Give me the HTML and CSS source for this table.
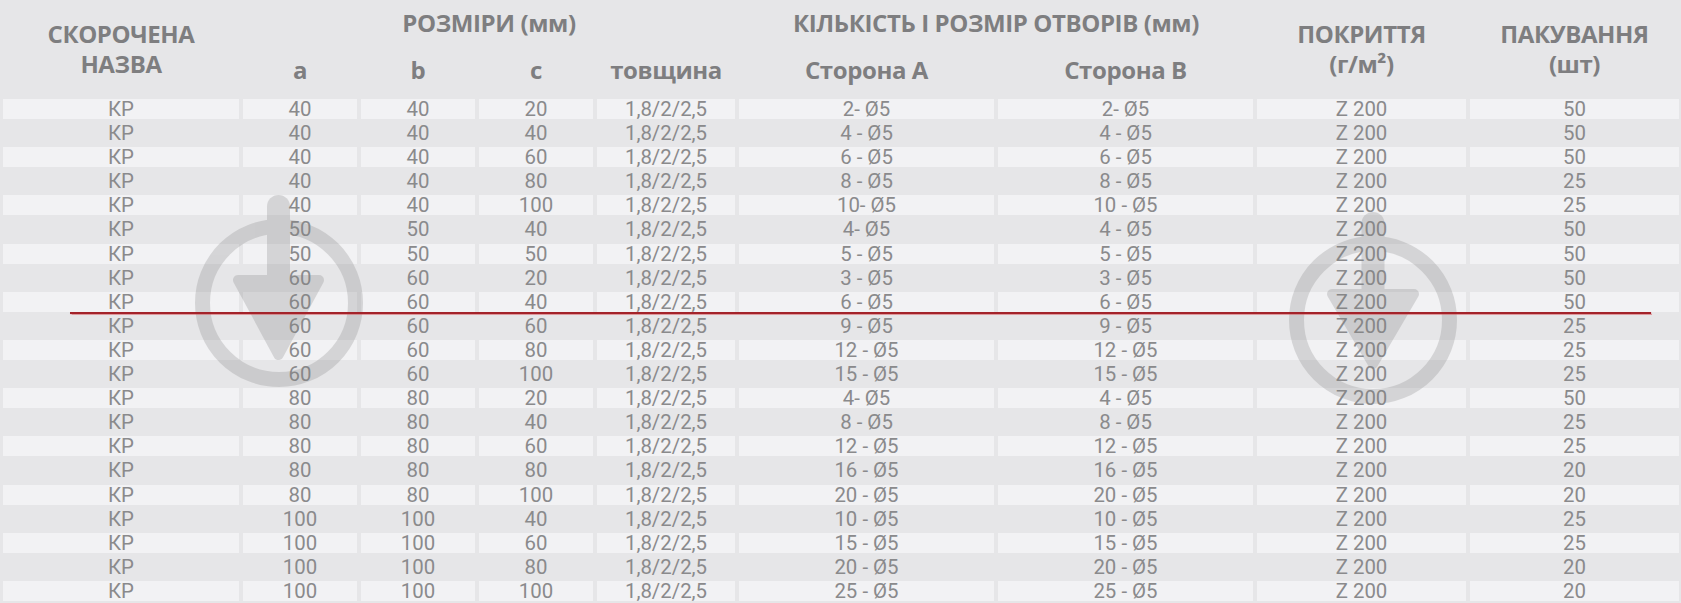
FILE: index.html
```html
<!DOCTYPE html>
<html lang="uk">
<head>
<meta charset="utf-8">
<title>КР</title>
<link rel="stylesheet" href="styles.css">
</head>
<body>
<div class="page">
  <div class="head">
    <div class="h-name">СКОРОЧЕНА<br>НАЗВА</div>
    <div class="h-group g-size">РОЗМІРИ (мм)</div>
    <div class="h-group g-holes">КІЛЬКІСТЬ І РОЗМІР ОТВОРІВ (мм)</div>
    <div class="h-name h-cover">ПОКРИТТЯ<br>(г/м²)</div>
    <div class="h-name h-pack">ПАКУВАННЯ<br>(шт)</div>
    <div class="h-sub s-a">a</div>
    <div class="h-sub s-b">b</div>
    <div class="h-sub s-c">c</div>
    <div class="h-sub s-t">товщина</div>
    <div class="h-sub s-sa">Сторона А</div>
    <div class="h-sub s-sb">Сторона В</div>
  </div>

  <div class="grid">
    <div class="row odd"><div>КР</div><div>40</div><div>40</div><div>20</div><div>1,8/2/2,5</div><div>2- Ø5</div><div>2- Ø5</div><div>Z 200</div><div>50</div></div>
    <div class="row"><div>КР</div><div>40</div><div>40</div><div>40</div><div>1,8/2/2,5</div><div>4 - Ø5</div><div>4 - Ø5</div><div>Z 200</div><div>50</div></div>
    <div class="row odd"><div>КР</div><div>40</div><div>40</div><div>60</div><div>1,8/2/2,5</div><div>6 - Ø5</div><div>6 - Ø5</div><div>Z 200</div><div>50</div></div>
    <div class="row"><div>КР</div><div>40</div><div>40</div><div>80</div><div>1,8/2/2,5</div><div>8 - Ø5</div><div>8 - Ø5</div><div>Z 200</div><div>25</div></div>
    <div class="row odd"><div>КР</div><div>40</div><div>40</div><div>100</div><div>1,8/2/2,5</div><div>10- Ø5</div><div>10 - Ø5</div><div>Z 200</div><div>25</div></div>
    <div class="row"><div>КР</div><div>50</div><div>50</div><div>40</div><div>1,8/2/2,5</div><div>4- Ø5</div><div>4 - Ø5</div><div>Z 200</div><div>50</div></div>
    <div class="row odd"><div>КР</div><div>50</div><div>50</div><div>50</div><div>1,8/2/2,5</div><div>5 - Ø5</div><div>5 - Ø5</div><div>Z 200</div><div>50</div></div>
    <div class="row"><div>КР</div><div>60</div><div>60</div><div>20</div><div>1,8/2/2,5</div><div>3 - Ø5</div><div>3 - Ø5</div><div>Z 200</div><div>50</div></div>
    <div class="row odd"><div>КР</div><div>60</div><div>60</div><div>40</div><div>1,8/2/2,5</div><div>6 - Ø5</div><div>6 - Ø5</div><div>Z 200</div><div>50</div></div>
    <div class="row"><div>КР</div><div>60</div><div>60</div><div>60</div><div>1,8/2/2,5</div><div>9 - Ø5</div><div>9 - Ø5</div><div>Z 200</div><div>25</div></div>
    <div class="row odd"><div>КР</div><div>60</div><div>60</div><div>80</div><div>1,8/2/2,5</div><div>12 - Ø5</div><div>12 - Ø5</div><div>Z 200</div><div>25</div></div>
    <div class="row"><div>КР</div><div>60</div><div>60</div><div>100</div><div>1,8/2/2,5</div><div>15 - Ø5</div><div>15 - Ø5</div><div>Z 200</div><div>25</div></div>
    <div class="row odd"><div>КР</div><div>80</div><div>80</div><div>20</div><div>1,8/2/2,5</div><div>4- Ø5</div><div>4 - Ø5</div><div>Z 200</div><div>50</div></div>
    <div class="row"><div>КР</div><div>80</div><div>80</div><div>40</div><div>1,8/2/2,5</div><div>8 - Ø5</div><div>8 - Ø5</div><div>Z 200</div><div>25</div></div>
    <div class="row odd"><div>КР</div><div>80</div><div>80</div><div>60</div><div>1,8/2/2,5</div><div>12 - Ø5</div><div>12 - Ø5</div><div>Z 200</div><div>25</div></div>
    <div class="row"><div>КР</div><div>80</div><div>80</div><div>80</div><div>1,8/2/2,5</div><div>16 - Ø5</div><div>16 - Ø5</div><div>Z 200</div><div>20</div></div>
    <div class="row odd"><div>КР</div><div>80</div><div>80</div><div>100</div><div>1,8/2/2,5</div><div>20 - Ø5</div><div>20 - Ø5</div><div>Z 200</div><div>20</div></div>
    <div class="row"><div>КР</div><div>100</div><div>100</div><div>40</div><div>1,8/2/2,5</div><div>10 - Ø5</div><div>10 - Ø5</div><div>Z 200</div><div>25</div></div>
    <div class="row odd"><div>КР</div><div>100</div><div>100</div><div>60</div><div>1,8/2/2,5</div><div>15 - Ø5</div><div>15 - Ø5</div><div>Z 200</div><div>25</div></div>
    <div class="row"><div>КР</div><div>100</div><div>100</div><div>80</div><div>1,8/2/2,5</div><div>20 - Ø5</div><div>20 - Ø5</div><div>Z 200</div><div>20</div></div>
    <div class="row odd"><div>КР</div><div>100</div><div>100</div><div>100</div><div>1,8/2/2,5</div><div>25 - Ø5</div><div>25 - Ø5</div><div>Z 200</div><div>20</div></div>
  </div>

  <svg class="watermark" width="1681" height="603" viewBox="0 0 1681 603" aria-hidden="true">
    <g opacity="0.25" fill="#7f7f7f" stroke="#7f7f7f">
      <circle cx="279" cy="303" r="76.5" fill="none" stroke-width="15"/>
      <rect x="267" y="195" width="23" height="92" rx="11.5" stroke="none"/>
      <polygon points="238,280 319,280 278.5,355" stroke-width="10" stroke-linejoin="round"/>
    </g>
    <g opacity="0.25" fill="#7f7f7f" stroke="#7f7f7f">
      <circle cx="1373" cy="320" r="76.5" fill="none" stroke-width="15"/>
      <rect x="1361.5" y="212" width="23" height="92" rx="11.5" stroke="none"/>
      <polygon points="1332,294 1414,294 1373,364" stroke-width="10" stroke-linejoin="round"/>
    </g>
  </svg>
  <div class="redline"></div>
</div>
</body>
</html>
```

FILE: styles.css
```css
html, body {
  margin: 0;
  padding: 0;
}

body {
  background: #e6e6e8;
  font-family: "Open Sans", "Noto Sans", sans-serif;
  width: 1681px;
  height: 603px;
  overflow: hidden;
}

.page {
  position: relative;
  width: 1681px;
  height: 603px;
}

.head,
.grid {
  display: grid;
  grid-template-columns: 236px 114px 114px 114px 138px 255px 255px 209px 209px;
  column-gap: 4px;
  padding: 0 2px 0 3px;
}

.head {
  grid-template-rows: 46px 49px;
  height: 95px;
  margin-bottom: 4px;
  color: #7e7e80;
  font-weight: 700;
  font-size: 24px;
  text-align: center;
}

.head > div {
  display: flex;
  align-items: center;
  justify-content: center;
  letter-spacing: -0.4px;
}

.h-name {
  grid-row: 1 / 3;
  line-height: 30px;
  padding-top: 3px;
  grid-column: 1;
}

.h-cover { grid-column: 8; }
.h-pack { grid-column: 9; }

.h-group {
  grid-row: 1;
  line-height: 30px;
}

.g-size { grid-column: 2 / 6; }
.g-holes { grid-column: 6 / 8; }

.h-sub {
  grid-row: 2;
  line-height: 30px;
  padding-bottom: 2px;
}

.s-a { grid-column: 2; }
.s-b { grid-column: 3; }
.s-c { grid-column: 4; }
.s-t { grid-column: 5; }
.s-sa { grid-column: 6; }
.s-sb { grid-column: 7; }

.grid {
  grid-auto-rows: 20.1px;
  row-gap: 4px;
  color: #8a8a8c;
  font-family: Roboto, "Open Sans", sans-serif;
  font-size: 20.4px;
  line-height: 20px;
  text-align: center;
}

.row {
  display: contents;
}

.row > div {
  white-space: nowrap;
}

.row.odd > div {
  background: #f2f2f4;
}

.watermark {
  position: absolute;
  left: 0;
  top: 0;
  pointer-events: none;
}

.redline {
  position: absolute;
  left: 70px;
  top: 312px;
  width: 1581px;
  height: 2px;
  background: #a3232a;
  box-shadow: 0 0 1px 0.5px rgba(215, 90, 95, 0.55);
  pointer-events: none;
}
```
